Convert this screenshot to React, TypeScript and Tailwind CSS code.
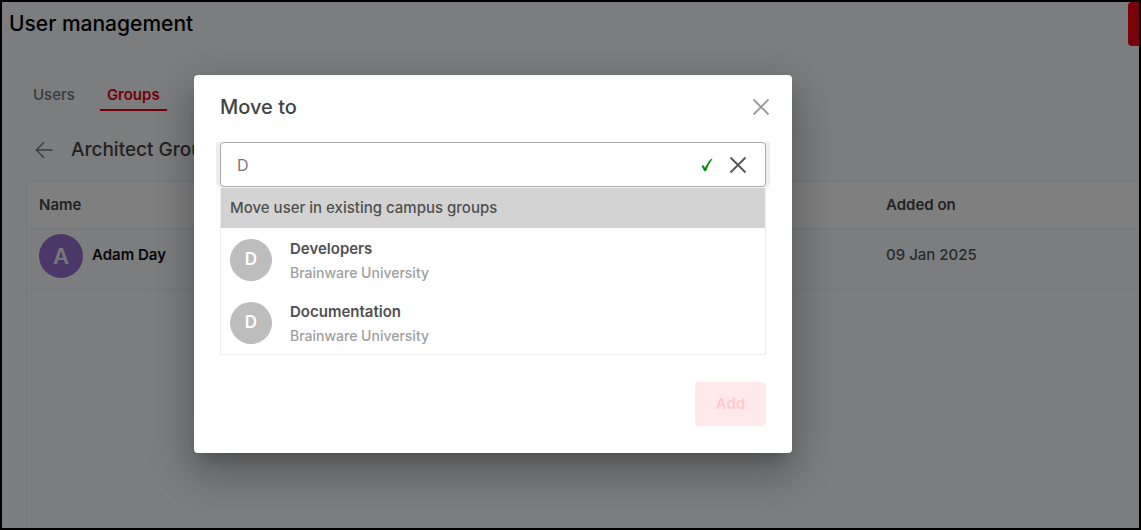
import { useState } from 'react';

interface Group {
  name: string;
  campus: string;
}

interface User {
  name: string;
  addedOn: string;
}

const groups: Group[] = [
  { name: 'Developers', campus: 'Brainware University' },
  { name: 'Documentation', campus: 'Brainware University' },
];

const users: User[] = [{ name: 'Adam Day', addedOn: '09 Jan 2025' }];

function CrossIcon() {
  return (
    <svg width="18" height="18" viewBox="0 0 18 18" fill="none" stroke="currentColor" strokeWidth="1.8">
      <path d="M1.5 1.5L16.5 16.5M16.5 1.5L1.5 16.5" />
    </svg>
  );
}

function CheckIcon() {
  return (
    <svg width="12" height="14" viewBox="0 0 12 14" fill="#078a07">
      <path d="M0.6 8.2C1.3 7.1 2.6 7 3.1 8.1L4 10.1C5.6 6.2 7.6 3.1 10 0.9C10.6 0.5 11.6 0.7 11.3 1.2C8.8 4.4 7 7.9 5.5 12.2C5.2 13.2 3.2 13.4 2.8 12.4C2.2 10.9 1.6 9.3 0.6 8.2Z" />
    </svg>
  );
}

function UsersPage() {
  return (
    <main className="flex flex-1 flex-col">
      <header className="flex h-11 items-center justify-between pl-[7px]">
        <h1 className="text-[21px] leading-8 font-medium text-black">User management</h1>
        <button type="button" aria-label="Create" className="h-11 w-[11px] rounded-l bg-[#f00812]" />
      </header>

      <nav className="mt-9 flex gap-[18px] pl-6 text-[15px] leading-[26px]">
        <a href="#users" className="px-[7px] pb-px font-medium text-[#777]">Users</a>
        <a href="#groups" className="border-b-2 border-[#e5000d] px-[7px] pb-px font-semibold text-[#e5000d]">Groups</a>
      </nav>

      <div className="mt-6 flex h-[30px] items-center gap-[18px] pl-[33px] text-[#444]">
        <button type="button" aria-label="Back" className="text-[#777]">
          <svg width="18" height="18" viewBox="0 0 18 18" fill="none" stroke="currentColor" strokeWidth="1.4">
            <path d="M17.5 9H1.5M9 1.2L1.3 9L9 16.8" />
          </svg>
        </button>
        <h2 className="text-[19px] leading-7 font-medium">Architect Group</h2>
      </div>

      <section className="mt-4 ml-6 flex-1 rounded-tl border-t border-l border-[#eceef0]">
        <table className="w-full table-fixed text-left text-[15px] leading-[26px]">
          <thead>
            <tr className="h-[46px] border-b border-[#eceef0] bg-[#fefefe] text-[#444]">
              <th className="w-[847px] pl-3 font-semibold">Name</th>
              <th className="pl-3 font-semibold">Added on</th>
            </tr>
          </thead>
          <tbody>
            {users.map((user) => (
              <tr key={user.name} className="h-[61px] border-b border-[#f1eeee] align-top">
                <td className="pt-[5px] pl-3">
                  <div className="flex gap-[9px]">
                    <span className="flex size-11 items-center justify-center rounded-full bg-[#9671d0] text-[22px] font-semibold text-[#eee]">
                      {user.name[0]}
                    </span>
                    <span className="pt-2 font-semibold text-[#111]">{user.name}</span>
                  </div>
                </td>
                <td className="pt-[13px] pl-3 font-medium text-[#555]">{user.addedOn}</td>
              </tr>
            ))}
          </tbody>
        </table>
      </section>
    </main>
  );
}

function MoveDialog() {
  const [query, setQuery] = useState('D');
  const matches = groups.filter((g) => g.name.toLowerCase().startsWith(query.toLowerCase()));

  return (
    <div
      role="dialog"
      aria-label="Move to"
      className="w-[598px] rounded bg-white px-[26px] pb-[27px] shadow-[0_11px_15px_-7px_rgba(0,0,0,0.2),0_24px_38px_3px_rgba(0,0,0,0.14),0_9px_46px_8px_rgba(0,0,0,0.12)]"
    >
      <div className="mb-[3px] flex h-16 items-center justify-between">
        <h2 className="text-xl leading-7 font-medium text-[#444]">Move to</h2>
        <button type="button" aria-label="Close" className="-mr-1 text-[#999]">
          <CrossIcon />
        </button>
      </div>

      {/* Search */}
      <div className="-mx-1 rounded-b-md bg-[#eee] px-1 pb-px">
        <div className="flex h-[45px] items-center rounded border border-[#aaa] bg-white pr-[18px] pl-4">
          <input
            type="text"
            aria-label="Search groups"
            value={query}
            onChange={(e) => setQuery(e.target.value)}
            className="min-w-0 flex-1 text-base leading-6 text-[#777] outline-none"
          />
          <CheckIcon />
          <button type="button" aria-label="Clear" onClick={() => setQuery('')} className="ml-4 text-[#555]">
            <CrossIcon />
          </button>
        </div>
      </div>

      {/* Matching groups */}
      <div className="border-x border-b border-[#eee]">
        <p className="h-10 bg-[#d3d3d3] pl-[9px] text-[15px] leading-10 font-medium text-[#505050]">
          Move user in existing campus groups
        </p>
        <ul>
          {matches.map((group) => (
            <li key={group.name}>
              <button type="button" className="flex h-[63px] w-full items-center gap-[18px] pl-[9px] text-left">
                <span className="flex size-[42px] items-center justify-center rounded-full bg-[#bdbdbd] text-[17px] font-semibold text-white">
                  {group.name[0]}
                </span>
                <span className="flex flex-col pt-[3px]">
                  <span className="text-[15px] leading-6 font-semibold text-[#505050]">{group.name}</span>
                  <span className="text-sm leading-6 font-medium text-[#a0a0a0]">{group.campus}</span>
                </span>
              </button>
            </li>
          ))}
        </ul>
      </div>

      <div className="mt-[27px] flex justify-end">
        <button type="button" disabled className="h-11 w-[71px] rounded bg-[#ffe9eb] text-[15px] font-semibold text-[#ffc9cd]">
          Add
        </button>
      </div>
    </div>
  );
}

export default function App() {
  return (
    <div className="relative flex min-h-screen flex-col overflow-hidden border-2 border-black bg-[#f8fafd] font-['Inter',sans-serif]">
      <UsersPage />
      <div className="absolute inset-0 flex items-start bg-black/50 pt-[73px] pl-[192px]">
        <MoveDialog />
      </div>
    </div>
  );
}
